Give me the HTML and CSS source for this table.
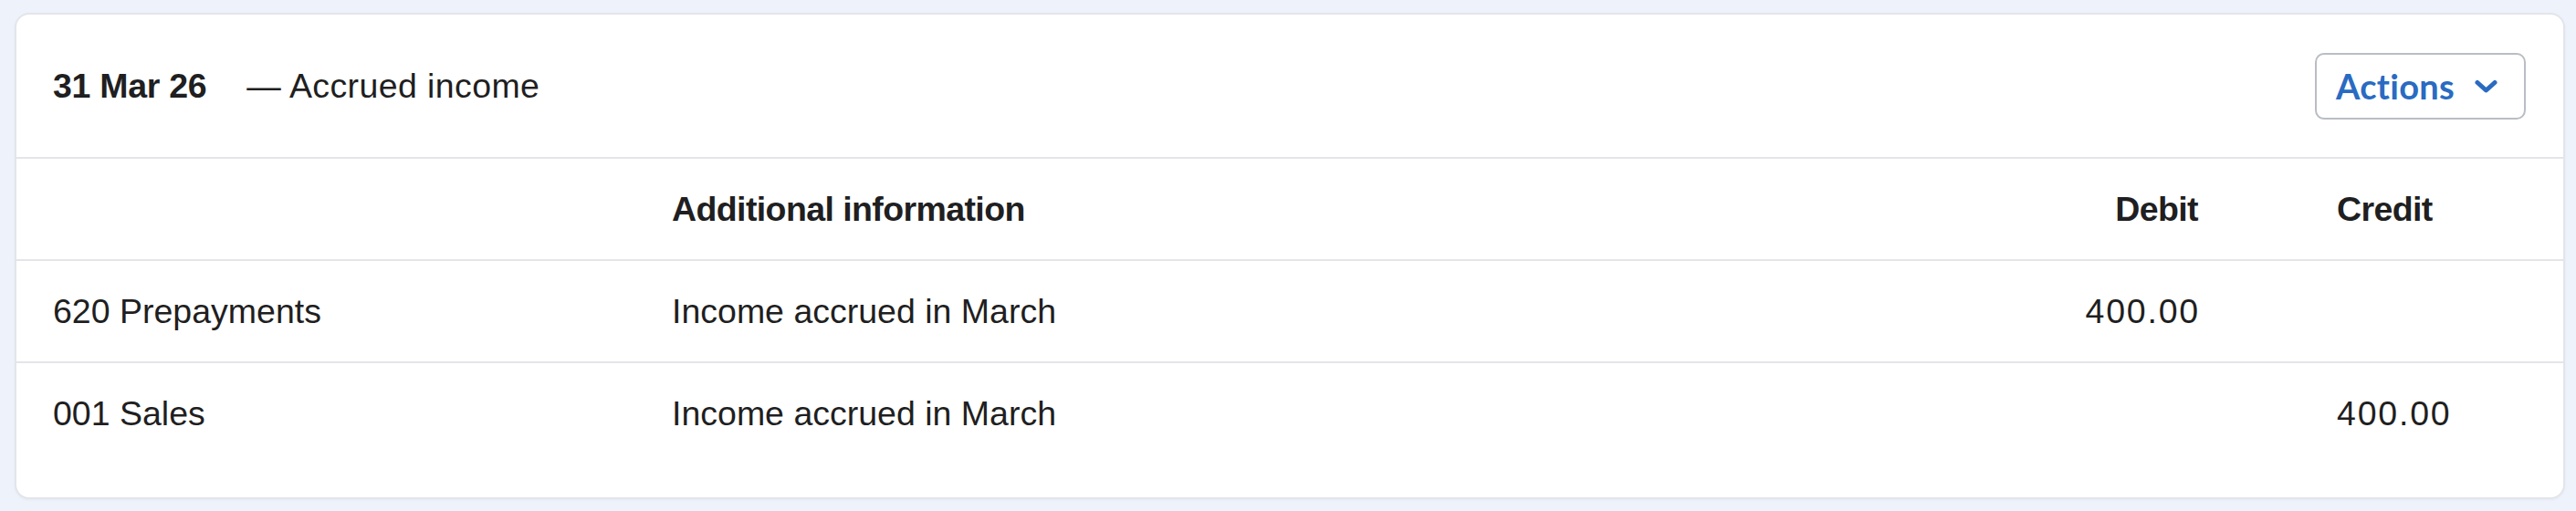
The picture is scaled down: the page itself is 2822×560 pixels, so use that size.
FILE: index.html
```html
<!DOCTYPE html>
<html lang="en">

<head>
  <meta charset="UTF-8" />
  <meta name="viewport" content="width=device-width, initial-scale=1.0" />
  <title>Journal</title>
  <link rel="stylesheet" href="styles.css">
</head>

<body>

  <div class="card">
    <div class="card-head">
      <div class="title">
        <span class="date">31 Mar 26</span>
        <span class="narration">— Accrued income</span>
      </div>
      <button class="actions">
        Actions
        <svg width="25" height="16" viewBox="0 0 25 16">
          <path d="M3 3.5 L12.5 12 L22 3.5" fill="none" stroke="currentColor" stroke-width="5" stroke-linecap="round" stroke-linejoin="round" />
        </svg>
      </button>
    </div>

    <div class="lines">
      <div class="row head">
        <div></div>
        <div>Additional information</div>
        <div class="debit">Debit</div>
        <div>Credit</div>
      </div>
      <div class="row">
        <div>620 Prepayments</div>
        <div>Income accrued in March</div>
        <div class="debit amount">400.00</div>
        <div></div>
      </div>
      <div class="row">
        <div>001 Sales</div>
        <div>Income accrued in March</div>
        <div class="debit"></div>
        <div class="amount">400.00</div>
      </div>
    </div>
  </div>

</body>

</html>
```

FILE: styles.css
```css
body {
  margin: 0;
  padding: 14px 12px 12px 16px;
  background-color: #eef3fb;
  font-family: "Liberation Sans", Arial, sans-serif;
  font-size: 37.5px;
  color: #1f1f22;
}

.card {
  background-color: #fff;
  border: 2px solid #e3e5ea;
  border-radius: 16px;
  box-shadow: 0 1px 3px rgba(30, 40, 60, 0.05);
  padding-bottom: 37px;
}

.card-head {
  display: flex;
  justify-content: space-between;
  align-items: center;
  height: 156px;
  padding: 0 41px 0 40px;
  border-bottom: 2px solid #e4e4ea;
}

.title {
  display: flex;
  align-items: center;
  gap: 44px;
}

.date {
  font-weight: bold;
  letter-spacing: -0.3px;
}

.narration {
  letter-spacing: 0.4px;
}

.actions {
  display: inline-flex;
  align-items: center;
  gap: 22px;
  height: 73px;
  padding: 0 29px 0 21px;
  background-color: #fff;
  border: 2px solid #b9bdc4;
  border-radius: 10px;
  color: #2a6bc2;
  font-family: Lato, "Liberation Sans", sans-serif;
  font-weight: bold;
  font-size: 38px;
  letter-spacing: 0.3px;
  cursor: pointer;
}

.actions svg {
  margin-top: 2px;
}

.row {
  display: grid;
  grid-template-columns: 678px 1fr 452px 248px;
  align-items: center;
  height: 110px;
  padding-left: 40px;
  border-bottom: 2px solid #e4e4ea;
}

.row:last-child {
  border-bottom: none;
}

.row.head {
  font-weight: bold;
  letter-spacing: -0.6px;
}

.debit {
  text-align: right;
  padding-right: 152px;
}

.amount {
  letter-spacing: 1.8px;
}

.debit.amount {
  margin-right: -2px;
}
```
